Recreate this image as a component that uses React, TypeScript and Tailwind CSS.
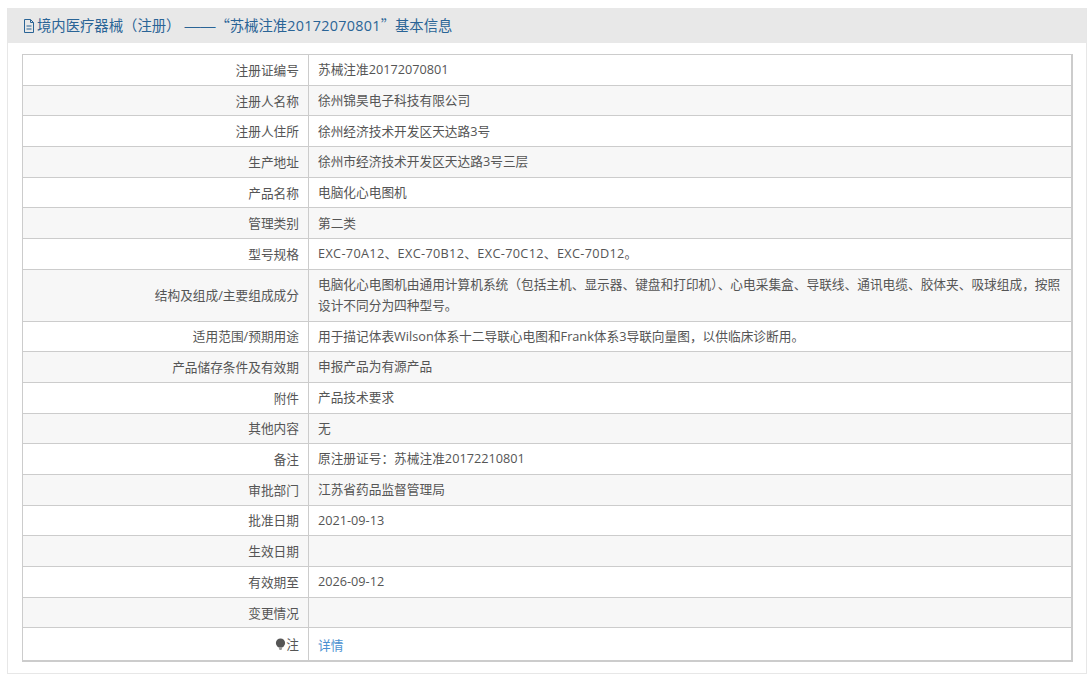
const rows: [string, string][] = [
  ["注册证编号", "苏械注准20172070801"],
  ["注册人名称", "徐州锦昊电子科技有限公司"],
  ["注册人住所", "徐州经济技术开发区天达路3号"],
  ["生产地址", "徐州市经济技术开发区天达路3号三层"],
  ["产品名称", "电脑化心电图机"],
  ["管理类别", "第二类"],
  ["型号规格", "EXC-70A12、EXC-70B12、EXC-70C12、EXC-70D12。"],
  ["结构及组成/主要组成成分", "电脑化心电图机由通用计算机系统（包括主机、显示器、键盘和打印机）、心电采集盒、导联线、通讯电缆、胶体夹、吸球组成，按照设计不同分为四种型号。"],
  ["适用范围/预期用途", "用于描记体表Wilson体系十二导联心电图和Frank体系3导联向量图，以供临床诊断用。"],
  ["产品储存条件及有效期", "申报产品为有源产品"],
  ["附件", "产品技术要求"],
  ["其他内容", "无"],
  ["备注", "原注册证号：苏械注准20172210801"],
  ["审批部门", "江苏省药品监督管理局"],
  ["批准日期", "2021-09-13"],
  ["生效日期", ""],
  ["有效期至", "2026-09-12"],
  ["变更情况", ""],
];

function Row({ label, value, odd }: { label: string; value: string; odd: boolean }) {
  return (
    <div className={`flex border-b border-[#cccccc] ${odd ? "bg-[#f7f7f7]" : "bg-white"}`}>
      <div className="flex w-[286px] shrink-0 items-center justify-end border-r border-[#cccccc] pt-[1px] pr-[9px]">{label}</div>
      <div className={`min-h-[29.7px] min-w-0 flex-1 pt-[4.2px] pr-[8px] pb-[4.5px] pl-[9px] leading-[21px] ${label === "型号规格" ? "tracking-[0.34px]" : ""}`}>
        {value}
      </div>
    </div>
  );
}

export default function App() {
  return (
    <div className="min-h-[694px] bg-white pt-[8px] pl-[7px] text-[12.7px] text-[#555555] [font-family:'Open_Sans','Noto_Sans_CJK_SC',sans-serif]">
      <div className="h-[666px] w-[1080px] border-r border-b border-l border-[#e7e7e7]">
        <div className="flex h-[35px] items-center bg-[#e8e8e8] pl-[14px] text-[14.35px] text-[#2a6496]">
          <svg width="15" height="14" viewBox="0 0 15 14" fill="none" stroke="#2a6496" strokeWidth="1" className="shrink-0">
            <path d="M2.5 0.5h6l3 3v10h-9z" />
            <path d="M8.5 0.5v3h3M4.5 7h5M4.5 10h5" />
          </svg>
          <span className="whitespace-nowrap">
            境内医疗器械（注册）
            <span className="ml-[4px] text-[15.5px] [font-family:'Liberation_Sans',sans-serif]">——</span>
            <span className="[font-family:'Noto_Sans_CJK_SC',sans-serif]">“</span>
            苏械注准
            <span className="tracking-[0.3px]">20172070801</span>
            <span className="[font-family:'Noto_Sans_CJK_SC',sans-serif]">”</span>
            基本信息
          </span>
        </div>
        <div className="mt-[11px] ml-[14px] w-[1051px] border border-r-2 border-b-2 border-[#cccccc]">
          {rows.map(([l, v], i) => (
            <Row key={l} label={l} value={v} odd={i % 2 === 1} />
          ))}
          <div className="flex h-[32px] bg-white">
            <div className="flex w-[286px] shrink-0 items-center justify-end border-r border-[#cccccc] pr-[9px]">
              <svg width="11" height="13" viewBox="0 0 11 13" className="shrink-0">
                <circle cx="5.5" cy="5" r="4.6" fill="#555555" />
                <path d="M3.5 9h4l-1 3h-2z" fill="#999999" />
              </svg>
              <span>注</span>
            </div>
            <div className="flex min-w-0 flex-1 items-center pt-[2px] pl-[9px] text-[#4a90d0]">详情</div>
          </div>
        </div>
      </div>
    </div>
  );
}
